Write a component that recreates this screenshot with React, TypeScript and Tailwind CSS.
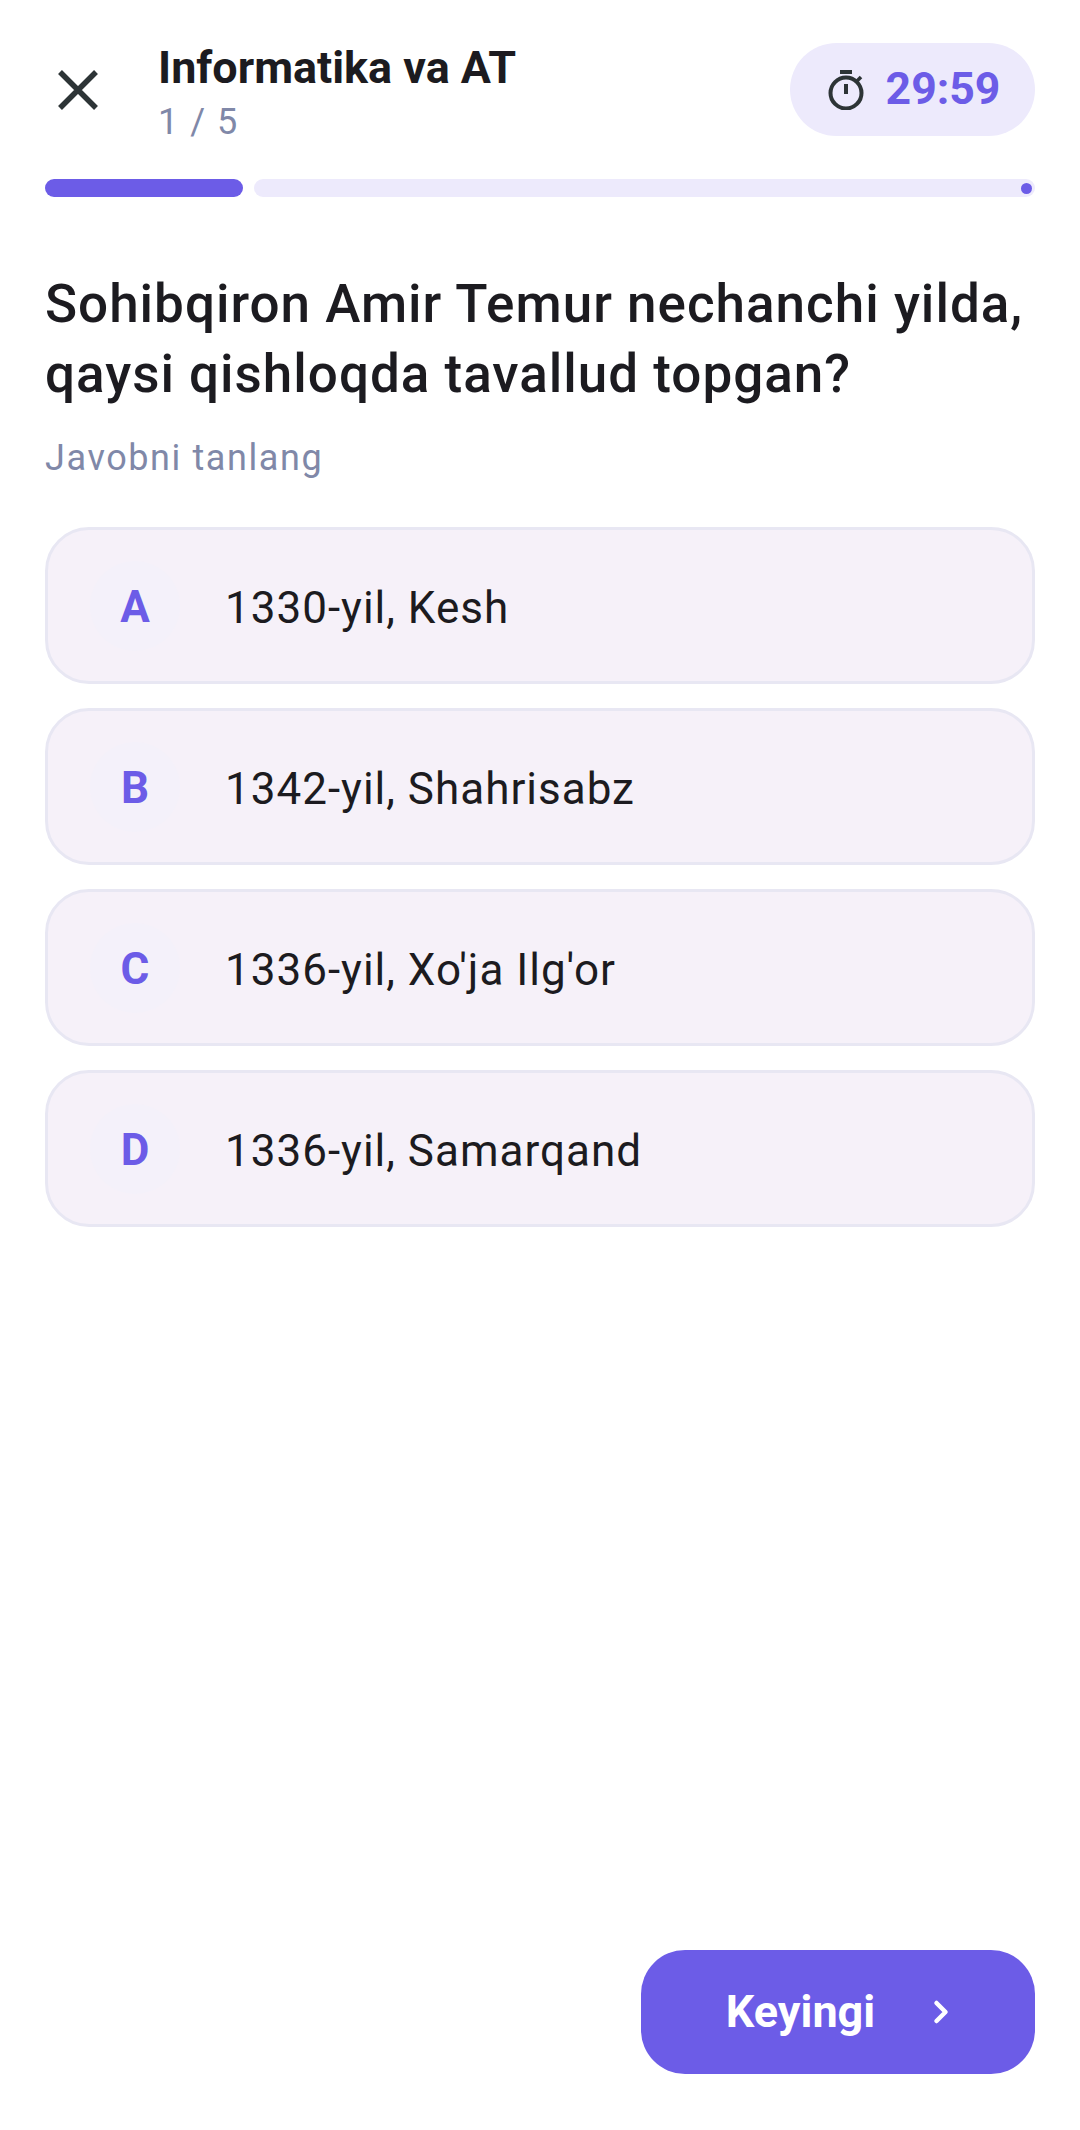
import { ChevronRight } from 'lucide-react';

const options = [
  { letter: 'A', text: '1330-yil, Kesh' },
  { letter: 'B', text: '1342-yil, Shahrisabz' },
  { letter: 'C', text: "1336-yil, Xo'ja Ilg'or" },
  { letter: 'D', text: '1336-yil, Samarqand' },
];

export default function App() {
  return (
    <div className="flex h-[2130px] w-[1080px] flex-col bg-white px-[45px] pb-[56px] font-['Roboto',sans-serif]">
      {/* Header */}
      <div className="flex h-[179px] shrink-0 flex-col">
        <div className="flex items-start pt-[43px]">
          <svg className="ml-[13px] mt-[27px] h-[40px] w-[40px] shrink-0" viewBox="0 0 40 40" fill="none">
            <path d="M2 2L38 38M38 2L2 38" stroke="#2D3436" strokeWidth="5.5" />
          </svg>
          <div className="ml-[60px] flex-1">
            <div className="text-[44.9px] leading-[50px] font-bold text-[#1C1B20]">Informatika va AT</div>
            <div className="mt-[7px] text-[36px] leading-[44px] tracking-[1.5px] text-[#8088A8]">1 / 5</div>
          </div>
          <div className="flex h-[93px] w-[245px] items-center justify-center gap-[22px] rounded-full bg-[#EDEAFC] pl-[3px]">
            <svg className="h-[40px] w-[36px] shrink-0" viewBox="0 0 36 40" fill="none">
              <path d="M12 2H24" stroke="#2D3436" strokeWidth="4" />
              <circle cx="18" cy="23" r="15.5" stroke="#2D3436" strokeWidth="4" />
              <path d="M18 14V24" stroke="#2D3436" strokeWidth="4" />
              <path d="M29 11L33 7" stroke="#2D3436" strokeWidth="3.5" />
            </svg>
            <span className="text-[44.6px] leading-none font-bold text-[#6C5CE7]">29:59</span>
          </div>
        </div>
      </div>

      {/* Progress */}
      <div className="flex h-[18px] shrink-0 gap-[11px]">
        <div className="h-full w-[198px] rounded-[9px] bg-[#6C5CE7]" />
        <div className="flex h-full flex-1 items-center justify-end rounded-[9px] bg-[#EDEAFC] pr-[3px]">
          <div className="h-[11px] w-[11px] rounded-full bg-[#6C5CE7]" />
        </div>
      </div>

      {/* Question */}
      <h1 className="mt-[72px] text-[53px] leading-[70px] tracking-[1px] font-medium text-[#1C1B20]">
        Sohibqiron Amir Temur nechanchi yilda,
        <br />
        qaysi qishloqda tavallud topgan?
      </h1>
      <p className="mt-[27px] text-[36px] leading-[44px] tracking-[1.6px] text-[#8088A8]">Javobni tanlang</p>

      {/* Options */}
      <div className="mt-[47px] flex flex-col gap-[24px]">
        {options.map((option) => (
          <div
            key={option.letter}
            className="flex h-[157px] items-center rounded-[44px] border-[3px] border-[#E8E7F3] bg-[#F6F1F9] pl-[42px]"
          >
            <div className="flex h-[90px] w-[90px] shrink-0 items-center justify-center rounded-full bg-[#F4F1FA] pt-[2px] text-[44px] font-bold text-[#6C5CE7]">
              {option.letter}
            </div>
            <span className="ml-[45px] pt-[4px] text-[44px] tracking-[1px] text-[#1C1B20]">{option.text}</span>
          </div>
        ))}
      </div>

      {/* Next */}
      <div className="mt-auto flex justify-end">
        <button className="flex h-[124px] w-[394px] items-center justify-center gap-[48px] rounded-[44px] bg-[#6C5CE7] pl-[9px] text-[45px] font-bold text-white">
          Keyingi
          <ChevronRight size={36} strokeWidth={3} />
        </button>
      </div>
    </div>
  );
}
